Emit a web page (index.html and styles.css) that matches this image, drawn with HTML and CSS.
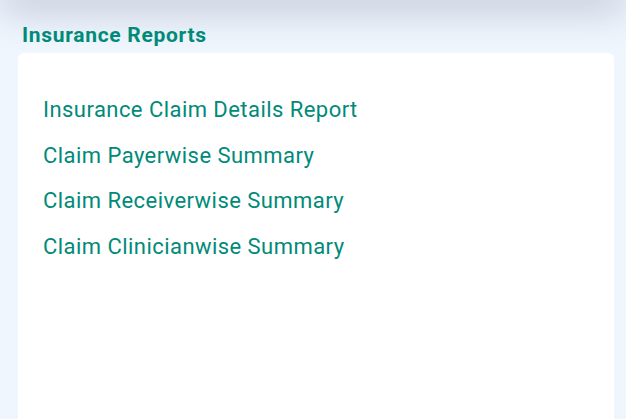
FILE: index.html
```html
<!DOCTYPE html>
<html lang="en">
<head>
  <meta charset="UTF-8" />
  <title>Insurance Reports</title>
  <link rel="stylesheet" href="styles.css">
</head>
<body>
  <!-- Header sits just above the visible area, only its shadow shows -->
  <div class="topbar"></div>

  <div class="page">
    <h2 class="section-title">Insurance Reports</h2>
    <div class="card">
      <ul class="report-list">
        <li><a href="#">Insurance Claim Details Report</a></li>
        <li><a href="#">Claim Payerwise Summary</a></li>
        <li><a href="#">Claim Receiverwise Summary</a></li>
        <li><a href="#">Claim Clinicianwise Summary</a></li>
      </ul>
    </div>
  </div>
</body>
</html>
```

FILE: styles.css
```css
* {
  margin: 0;
  padding: 0;
  box-sizing: border-box;
  font-family: Roboto, "Liberation Sans", sans-serif;
}
html, body {
  height: 100%;
  overflow: hidden;
}
body {
  background: #eff6fe;
}
.topbar {
  height: 20px;
  margin-top: -20px;
  background: #fff;
  box-shadow: 0 6px 40px rgba(60, 70, 100, 0.4);
}
.page {
  padding: 22px 12px 0 18px;
}
.section-title {
  font-size: 21px;
  font-weight: 700;
  letter-spacing: 0.7px;
  color: #008a78;
  padding-left: 4px;
  line-height: 26px;
}
.card {
  background: #fff;
  border-radius: 6px;
  margin-top: 5px;
  height: 380px;
  padding: 45px 25px;
}
.report-list {
  list-style: none;
  display: flex;
  flex-direction: column;
  gap: 21.5px;
}
.report-list a {
  color: #008a78;
  font-size: 22px;
  letter-spacing: 0.45px;
  line-height: 24px;
  text-decoration: none;
}
```
